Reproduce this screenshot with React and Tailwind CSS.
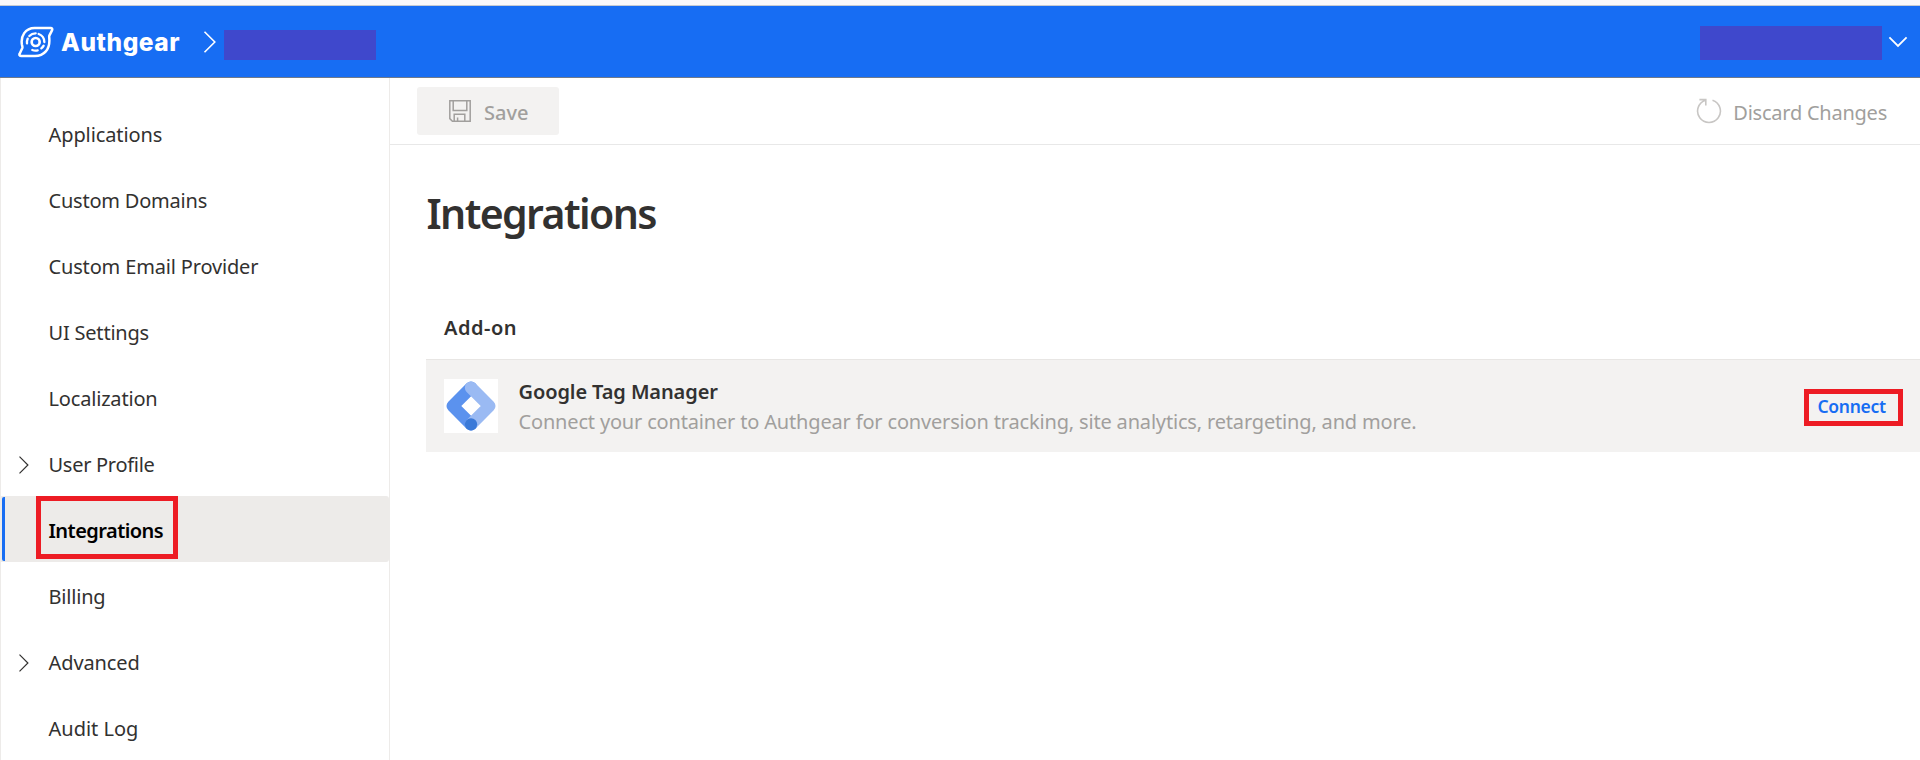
function Chevron({ className, d, w, h, sw }) {
  return (
    <svg className={className} width={w} height={h} viewBox={`0 0 ${w} ${h}`} fill="none" stroke="currentColor" strokeWidth={sw}>
      <path d={d} />
    </svg>
  );
}

function Logo() {
  return (
    <svg width="36" height="32" viewBox="0 0 108 96" fill="none" stroke="white" strokeLinecap="round" strokeLinejoin="round">
      <path strokeWidth="7.5" d="M50 6H98C102 6 104 9 102 13L94 29C93 32 94 35 94 39C96 70 78 90 51 90H10C5 90 3 87 5 83L13 66C14 63 13 61 12 57C7 30 22 6 50 6Z" />
      <circle strokeWidth="8" cx="53" cy="48" r="12" />
      <g strokeWidth="7">
        <path d="M27 52A26 26 0 0 1 29 38" />
        <path d="M34 30A26 26 0 0 1 53 22" />
        <path d="M62 24A26 26 0 0 1 79 48" />
        <path d="M77 59A26 26 0 0 1 70 67" />
        <path d="M59 73A26 26 0 0 1 43 72" />
      </g>
    </svg>
  );
}

function SaveIcon() {
  return (
    <svg width="22" height="22" viewBox="0 0 22 22" fill="none" stroke="currentColor" strokeWidth="1.5">
      <path d="M0.8 0.8H21.2V21.2H3.4L0.8 18.6Z" />
      <path d="M4.2 0.8V10.6H17.8V0.8M5.2 21.2V14.3H15.8V21.2M8.6 21.2V17.4" />
    </svg>
  );
}

function ResetIcon() {
  return (
    <svg className="mt-[-1px] text-[#c8c6c4]" width="26" height="26" viewBox="0 0 26 26" fill="none" stroke="currentColor" strokeWidth="1.6">
      <path d="M16.5 2.2A11.4 11.4 0 1 1 9.5 2.2M3.4 1.6H9.8V7.6" />
    </svg>
  );
}

function TagManagerLogo() {
  return (
    <svg width="54" height="54" viewBox="0 0 162 162">
      <rect width="162" height="162" fill="white" />
      <path d="M81 26L26 81L81 136" fill="none" stroke="#5b92ee" strokeWidth="37" strokeLinecap="round" strokeLinejoin="round" />
      <path d="M81 26L136 81L81 136" fill="none" stroke="#9abaf3" strokeWidth="37" strokeLinecap="round" strokeLinejoin="round" />
      <circle cx="81" cy="136" r="18.5" fill="#3a79d8" />
    </svg>
  );
}

const nav = [
  { label: 'Applications', ls: 'tracking-[-0.1px]' },
  { label: 'Custom Domains', ls: 'tracking-[-0.21px]' },
  { label: 'Custom Email Provider', ls: 'tracking-[-0.16px]' },
  { label: 'UI Settings', ls: 'tracking-[-0.2px]' },
  { label: 'Localization', ls: 'tracking-[-0.18px]' },
  { label: 'User Profile', ls: 'tracking-[-0.28px]', group: true },
  { label: 'Integrations', active: true },
  { label: 'Billing', ls: 'tracking-[-0.2px]' },
  { label: 'Advanced', ls: 'tracking-[-0.1px]', group: true },
  { label: 'Audit Log', ls: 'tracking-[0px]' },
];

function NavItem({ item }) {
  if (item.active) {
    return (
      <li className="relative flex h-[66px] items-center rounded-r-[3px] bg-[#edebe9] pl-[47.5px]">
        <span className="absolute left-[1px] top-[1px] h-16 w-[3px] rounded-l-[2px] bg-[#176df3]" />
        <span className="mt-[4px] text-[20px] font-[600] leading-[28px] tracking-[-0.55px] text-black">{item.label}</span>
        <span className="absolute left-[35px] top-0 h-[63px] w-[142px] border-[5px] border-[#ed1c24]" />
      </li>
    );
  }
  return (
    <li className="flex h-[66px] items-center text-[#323130]">
      <span className="mt-[3px] w-[47.5px] pl-[17px]">
        {item.group && <Chevron w={11} h={18} sw={1.2} d="M1.5 0.6L9.9 9L1.5 17.4" />}
      </span>
      <span className={`mt-[4px] text-[20px] leading-[28px] ${item.ls}`}>{item.label}</span>
    </li>
  );
}

export default function App() {
  return (
    <div className="flex h-[760px] w-[1920px] flex-col overflow-hidden bg-white font-['Noto_Sans',sans-serif]">
      <div className="h-[6px] shrink-0 border-b border-[#c5cbd3] bg-[#f9f9fb]" />
      <header className="flex h-[72px] shrink-0 items-center border-b border-[#6f7a8c] bg-[#176df3] text-white">
        <div className="ml-[17.5px] mt-[1px]"><Logo /></div>
        <span className="ml-[7.5px] mt-px w-[119px] whitespace-nowrap font-['Inter',sans-serif] text-[24.5px] font-[800] leading-[30px] tracking-[0.55px]">Authgear</span>
        <Chevron className="ml-[23px]" w={14} h={22} sw={1.6} d="M1.5 0.8L11.8 11L1.5 21.2" />
        <span className="ml-[7px] mt-[6px] h-[30px] w-[152px] bg-[#3f48cc]" />
        <span className="ml-auto mt-[2px] h-[34px] w-[182px] bg-[#3f48cc]" />
        <Chevron className="ml-[6px] mr-[12px]" w={20} h={12} sw={1.8} d="M1.4 1.4L10 10L18.6 1.4" />
      </header>
      <div className="flex min-h-0 flex-1">
        <nav className="w-[390px] shrink-0 border-x border-[#edebe9] pt-[22px]">
          <ul>{nav.map((item) => <NavItem key={item.label} item={item} />)}</ul>
        </nav>
        <main className="min-w-0 flex-1">
          <div className="flex h-[67px] items-start border-b border-[#e8e8e8]">
            <button className="ml-[27px] mt-[9px] flex h-12 w-[142px] items-center rounded-[3px] bg-[#f3f2f1] pl-[32px] text-[#a19f9d]">
              <SaveIcon />
              <span className="ml-[13px] mt-[4px] text-[20px] font-[550] leading-[28px] tracking-[0px]">Save</span>
            </button>
            <button className="ml-auto mr-[33px] mt-[9px] flex h-12 items-center text-[#a19f9d]">
              <ResetIcon />
              <span className="ml-[11.5px] mt-[4px] text-[20px] leading-[28px] tracking-[-0.24px]">Discard Changes</span>
            </button>
          </div>
          <h1 className="ml-[36.5px] mt-[40px] text-[41px] font-[600] leading-[56px] tracking-[-1.6px] text-[#323130]">Integrations</h1>
          <h2 className="ml-[54px] mt-[73px] text-[20px] font-[600] leading-[28px] tracking-[0.5px] text-[#323130]">Add-on</h2>
          <section className="ml-[36px] mt-[17px] flex h-[93px] items-center border-t border-[#e8e6e4] bg-[#f3f2f1] pl-[18px]">
            <TagManagerLogo />
            <div className="ml-[20.5px] mt-[2px] flex flex-col">
              <span className="text-[20px] font-[600] leading-[30px] tracking-[-0.1px] text-[#323130]">Google Tag Manager</span>
              <span className="text-[20px] leading-[30px] tracking-[-0.17px] text-[#a19f9d]">Connect your container to Authgear for conversion tracking, site analytics, retargeting, and more.</span>
            </div>
            <div className="ml-auto mr-[17px] mt-[2px] flex h-[37px] w-[99px] items-center border-[5px] border-[#ed1c24] pb-[2px] pl-[8.5px]">
              <span className="text-[17.5px] font-[600] leading-[24px] tracking-[-0.3px] text-[#176df3]">Connect</span>
            </div>
          </section>
        </main>
      </div>
    </div>
  );
}
